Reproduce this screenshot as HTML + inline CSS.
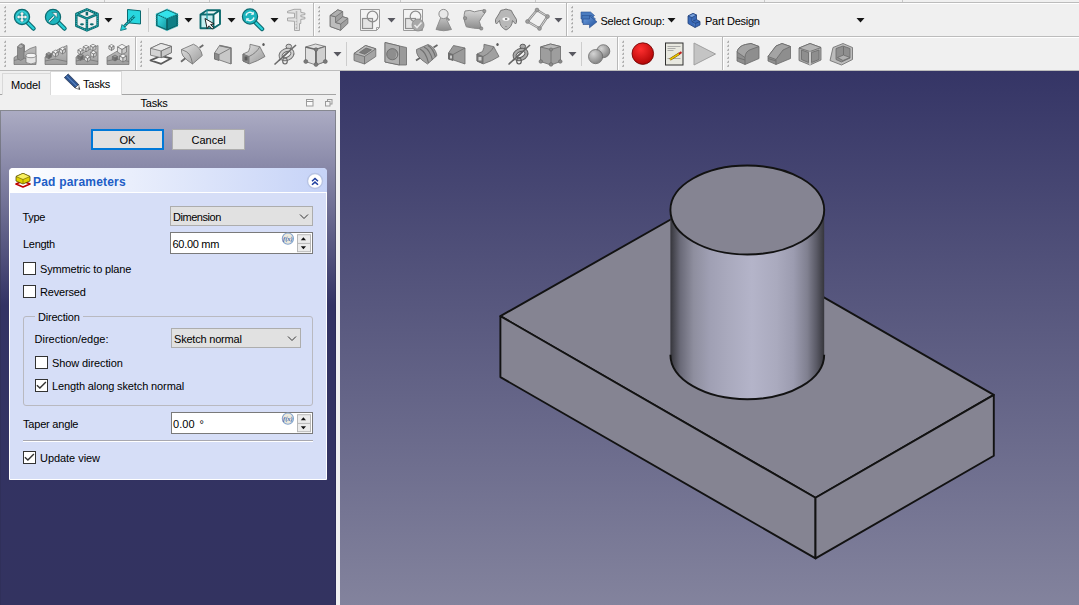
<!DOCTYPE html>
<html><head><meta charset="utf-8">
<style>
*{box-sizing:border-box}
html,body{margin:0;padding:0}
body{width:1079px;height:605px;overflow:hidden;position:relative;background:#f0f0f0;font-family:"Liberation Sans",sans-serif;font-size:11px;color:#000}
.a{position:absolute}
.t{position:absolute;white-space:nowrap;letter-spacing:-0.15px;line-height:13px}
.cb{position:absolute;width:13px;height:13px;border:1px solid #333;background:#fff}
.combo{position:absolute;background:#e1e1e1;border:1px solid #adadad}
.spin{position:absolute;background:#fff;border:1px solid #7a7a7a}
</style></head><body>
<!-- toolbar lines -->
<div class="a" style="left:0;top:2px;width:1079px;height:1px;background:#bcbcbc"></div>
<div class="a" style="left:0;top:3px;width:1079px;height:1px;background:#ffffff"></div>
<div class="a" style="left:0;top:36px;width:1079px;height:1px;background:#bcbcbc"></div>
<div class="a" style="left:0;top:37px;width:1079px;height:1px;background:#ffffff"></div>
<div class="a" style="left:0;top:70px;width:1079px;height:1px;background:#bcbcbc"></div>
<div class="t" style="left:600.5px;top:14.5px;letter-spacing:-0.25px">Select Group:</div>
<div class="t" style="left:705px;top:14.5px;letter-spacing:-0.25px">Part Design</div>

<svg class="a" style="left:0;top:0" width="1079" height="71" viewBox="0 0 1079 71">
<defs>
 <linearGradient id="gg" x1="0" y1="0" x2="1" y2="1"><stop offset="0" stop-color="#e4e4e4"/><stop offset="1" stop-color="#9a9a9a"/></linearGradient>
 <linearGradient id="gg2" x1="0" y1="0" x2="0" y2="1"><stop offset="0" stop-color="#d8d8d8"/><stop offset="1" stop-color="#8c8c8c"/></linearGradient>
 <linearGradient id="tl" x1="0" y1="0" x2="1" y2="1"><stop offset="0" stop-color="#3fe6ee"/><stop offset="1" stop-color="#139aa2"/></linearGradient>
 <radialGradient id="red" cx="0.4" cy="0.3" r="0.8"><stop offset="0" stop-color="#ff3030"/><stop offset="1" stop-color="#a80000"/></radialGradient>
 <linearGradient id="blu" x1="0" y1="0" x2="1" y2="1"><stop offset="0" stop-color="#6fa0e0"/><stop offset="1" stop-color="#1f4f9a"/></linearGradient>
 <radialGradient id="sph" cx="0.35" cy="0.3" r="0.75"><stop offset="0" stop-color="#d4d4d4"/><stop offset="1" stop-color="#808080"/></radialGradient>
 <g id="grip"><rect x="0" y="0" width="2" height="2" fill="#b4b4b4"/></g>
</defs>
<!-- top strip vertical lines -->
<g fill="#c8c8c8">
 <rect x="104" y="0" width="1" height="2"/><rect x="209" y="0" width="1" height="2"/><rect x="252" y="0" width="1" height="2"/>
 <rect x="400" y="0" width="1" height="2"/><rect x="535" y="0" width="1" height="2"/><rect x="764" y="0" width="1" height="2"/><rect x="902" y="0" width="1" height="2"/>
</g>
<!-- toolbar boundaries -->
<g fill="#b8b8b8">
 <rect x="313" y="3" width="1" height="33"/><rect x="566" y="3" width="1" height="33"/>
 <rect x="135" y="37" width="1" height="33"/><rect x="617" y="37" width="1" height="33"/><rect x="722" y="37" width="1" height="33"/>
</g>
<g fill="#ffffff">
 <rect x="314" y="3" width="1" height="33"/><rect x="567" y="3" width="1" height="33"/>
 <rect x="136" y="37" width="1" height="33"/><rect x="618" y="37" width="1" height="33"/><rect x="723" y="37" width="1" height="33"/>
</g>
<!-- separators -->
<g fill="#cdcdcd">
 <rect x="148" y="8" width="1" height="24"/>
 <rect x="346" y="42" width="1" height="24"/><rect x="581" y="42" width="1" height="24"/>
</g>
<!-- grips -->
<path fill="#a8a8a8" d="M5 6.2h1v2h-2v-1h1zM5 10.2h1v2h-2v-1h1zM5 14.2h1v2h-2v-1h1zM5 18.2h1v2h-2v-1h1zM5 22.2h1v2h-2v-1h1zM5 26.2h1v2h-2v-1h1zM5 30.2h1v2h-2v-1h1zM319 6.2h1v2h-2v-1h1zM319 10.2h1v2h-2v-1h1zM319 14.2h1v2h-2v-1h1zM319 18.2h1v2h-2v-1h1zM319 22.2h1v2h-2v-1h1zM319 26.2h1v2h-2v-1h1zM319 30.2h1v2h-2v-1h1zM572 6.2h1v2h-2v-1h1zM572 10.2h1v2h-2v-1h1zM572 14.2h1v2h-2v-1h1zM572 18.2h1v2h-2v-1h1zM572 22.2h1v2h-2v-1h1zM572 26.2h1v2h-2v-1h1zM572 30.2h1v2h-2v-1h1zM5 40.7h1v2h-2v-1h1zM5 44.7h1v2h-2v-1h1zM5 48.7h1v2h-2v-1h1zM5 52.7h1v2h-2v-1h1zM5 56.7h1v2h-2v-1h1zM5 60.7h1v2h-2v-1h1zM5 64.7h1v2h-2v-1h1zM141 40.7h1v2h-2v-1h1zM141 44.7h1v2h-2v-1h1zM141 48.7h1v2h-2v-1h1zM141 52.7h1v2h-2v-1h1zM141 56.7h1v2h-2v-1h1zM141 60.7h1v2h-2v-1h1zM141 64.7h1v2h-2v-1h1zM623 40.7h1v2h-2v-1h1zM623 44.7h1v2h-2v-1h1zM623 48.7h1v2h-2v-1h1zM623 52.7h1v2h-2v-1h1zM623 56.7h1v2h-2v-1h1zM623 60.7h1v2h-2v-1h1zM623 64.7h1v2h-2v-1h1zM728 40.7h1v2h-2v-1h1zM728 44.7h1v2h-2v-1h1zM728 48.7h1v2h-2v-1h1zM728 52.7h1v2h-2v-1h1zM728 56.7h1v2h-2v-1h1zM728 60.7h1v2h-2v-1h1zM728 64.7h1v2h-2v-1h1z"/>
<!-- dropdown arrows -->
<g fill="#151515">
 <path d="M104.5 18h8l-4 4.5z"/><path d="M184.5 18h8l-4 4.5z"/><path d="M227.5 18h8l-4 4.5z"/><path d="M270.5 18h8l-4 4.5z"/>
 <path d="M667.5 18h8l-4 4.5z"/><path d="M856.5 18h8l-4 4.5z"/>
</g>
<g fill="#585860">
 <path d="M387.5 18h8l-4 4.5z"/><path d="M554.5 18h8l-4 4.5z"/>
 <path d="M333.5 52h8l-4 4.5z"/><path d="M568.5 52h8l-4 4.5z"/>
</g>

<!-- ROW 1 TB1 (teal) -->
<!-- zoom fit -->
<path d="M27 22 L33.5 28.5" stroke="#0b6a70" stroke-width="4.5" stroke-linecap="round"/>
<path d="M27 22 L33.5 28.5" stroke="#2ad0d8" stroke-width="2.4" stroke-linecap="round"/>
<circle cx="22" cy="17" r="7.6" fill="#1db5be" stroke="#0b6a70" stroke-width="1.2"/>
<circle cx="22" cy="17" r="5.6" fill="none" stroke="#40d8e0" stroke-width="1"/>
<path d="M22 11.5l2.6 3h-1.6v1.6h1.6v-1.4l3 2.3-3 2.3v-1.4h-1.6v1.6h1.6l-2.6 3-2.6-3h1.6v-1.6h-1.6v1.4l-3-2.3 3-2.3v1.4h1.6v-1.6h-1.6z" fill="#f4f4f4" stroke="#0b6a70" stroke-width=".4"/>
<!-- zoom selection -->
<path d="M58 22 L64.5 28.5" stroke="#0b6a70" stroke-width="4.5" stroke-linecap="round"/>
<path d="M58 22 L64.5 28.5" stroke="#2ad0d8" stroke-width="2.4" stroke-linecap="round"/>
<circle cx="53" cy="17" r="7.6" fill="#1db5be" stroke="#0b6a70" stroke-width="1.2"/>
<path d="M49 21.5l5-5" stroke="#0b6a70" stroke-width="2.6"/>
<path d="M49 21.5l5-5" stroke="#f4f4f4" stroke-width="1.3"/>
<path d="M52 12.5h5.2v5.2z" fill="#f4f4f4" stroke="#0b6a70" stroke-width=".6"/>
<!-- iso cube -->
<g fill="none" stroke-linejoin="round">
<path d="M86.9 9.3L97.6 14V25.8L86.9 30.4L76.3 25.8V14Z M76.3 14L86.9 18.6L97.6 14 M86.9 18.6V30.4 M86.9 11.8V15.6" stroke="#0d6a6e" stroke-width="2.5"/>
<path d="M86.9 9.3L97.6 14V25.8L86.9 30.4L76.3 25.8V14Z M76.3 14L86.9 18.6L97.6 14 M86.9 18.6V30.4" stroke="#2ccfd6" stroke-width="0.8" stroke-dasharray="1.2 1"/>
</g>
<ellipse cx="82" cy="24.3" rx="2" ry="1.1" fill="#0d6a6e"/><ellipse cx="91.8" cy="24.3" rx="2" ry="1.1" fill="#0d6a6e"/>
<!-- set view square -->
<path d="M127.5 9.5L140.5 10.8V24L127.5 22.8Z" fill="#28d6de" stroke="#0b6a70" stroke-width="1"/>
<path d="M134.5 16L124 26.5" stroke="#0b6a70" stroke-width="2.6"/>
<path d="M134.5 16L124 26.5" stroke="#28d6de" stroke-width="1.2" stroke-dasharray="1.5 1"/>
<path d="M120.5 30.5L122 24.5L126.5 29Z" fill="#28d6de" stroke="#0b6a70" stroke-width=".8"/>
<!-- solid teal cube -->
<path d="M167 8.9L178 13.9V25.9L167 30.8L156 25.9V13.9Z" fill="#0b5e62"/>
<path d="M167 10.3L176.4 14.3L167 18.3L157.6 14.3Z" fill="#34e2ea"/>
<path d="M157.5 15.2L166.2 19V29L157.5 25.2Z" fill="url(#tl)"/>
<path d="M176.5 15.2L167.8 19V29L176.5 25.2Z" fill="#0f7f86"/>
<path d="M167 8.9L178 13.9V25.9L167 30.8L156 25.9V13.9Z M156 13.9L167 18.6L178 13.9" fill="none" stroke="#2bd0d8" stroke-width=".7" stroke-dasharray="1.2 1"/>
<!-- wire cube with cursor -->
<path d="M200.5 14.5L207 10.3H220V24L213.5 28.2H200.5Z" fill="#f4fafa"/>
<rect x="201.5" y="15.5" width="11" height="11.7" fill="#c4eef0"/>
<path d="M200.5 14.5H213.5V28.2H200.5Z M200.5 14.5L207 10.3H220L213.5 14.5 M220 10.3V24L213.5 28.2" fill="none" stroke="#0d6a6e" stroke-width="1.9" stroke-linejoin="round"/>
<path d="M207 10.3V14.5 M207 14.5V20" fill="none" stroke="#1a9aa0" stroke-width="1.2"/>
<path d="M205 18.5v10.3l2.5-2.3 2.3 3.8 1.7-.9-2.2-3.8h3.5z" fill="#fafafa" stroke="#1a1a1a" stroke-width=".9" transform="rotate(-12 205 18.5)"/>
<!-- zoom refresh -->
<path d="M255 22 L262 29" stroke="#0b6a70" stroke-width="4.5" stroke-linecap="round"/>
<path d="M255 22 L262 29" stroke="#2ad0d8" stroke-width="2.4" stroke-linecap="round"/>
<circle cx="250" cy="16.5" r="7.6" fill="#1db5be" stroke="#0b6a70" stroke-width="1.2"/>
<path d="M246 15.5a4 4 0 0 1 7.2-1.5M254 17.5a4 4 0 0 1-7.2 1.5" fill="none" stroke="#e8f8f8" stroke-width="1.5"/>
<path d="M253.8 11.5v3.2h-3.2z M246.2 21.5v-3.2h3.2z" fill="#e8f8f8"/>
<!-- caliper -->
<path d="M287.5 11.3L294 9.3H300.8V12.3L305 13.2V14.6L300.8 15.2V16.6L305 17.4V18.8L300.8 19.4V23.5H299.5V30.5H294.5V21.3L287.5 20.8V18L294.5 17.8V13.2L287.5 12.8Z" fill="#e2e2e2" stroke="#a0a0a0" stroke-width=".9" stroke-linejoin="round"/>
<path d="M296.5 11v18" stroke="#b8b8b8" stroke-width="1.6"/>
<path d="M295 20h2M295 23h2M295 26h2" stroke="#f8f8f8" stroke-width=".8"/>
<!-- ROW 1 TB2 (gray disabled) -->
<!-- L-block -->
<g stroke="#6e6e6e" stroke-width=".8" stroke-linejoin="round">
<path d="M330.2 15.4L337.8 9.8L342.7 11.6V16.7L347.9 18.3V23.4L340.7 30.3L330.2 26.5Z" fill="#a0a0a0"/>
<path d="M330.2 15.4L335.5 16.8V22.5L340.7 24V30.3L330.2 26.5Z" fill="#bdbdbd"/>
<path d="M330.2 15.4L337.8 9.8L342.7 11.6L335.5 16.8Z" fill="#b0b0b0"/>
<path d="M335.5 22.5L342.7 16.7L347.9 18.3L340.7 24Z" fill="#b0b0b0"/>
</g>
<!-- sketch -->
<path d="M360.5 9.5h19v18l-3 3h-16z" fill="#f4f4f4" stroke="#9a9a9a" stroke-width="1"/>
<path d="M376.5 30.5v-3h3" fill="none" stroke="#9a9a9a" stroke-width=".9"/>
<rect x="362.5" y="18.5" width="10" height="10" fill="#e4e4e4" stroke="#8e8e8e" stroke-width="1.2"/>
<circle cx="372.5" cy="16.5" r="5.3" fill="none" stroke="#8e8e8e" stroke-width="1.2"/>
<!-- validate sketch -->
<path d="M403.5 9.5h19v21h-19z" fill="#f4f4f4" stroke="#9a9a9a" stroke-width="1"/>
<rect x="405.5" y="18.5" width="10" height="10" fill="#e4e4e4" stroke="#8e8e8e" stroke-width="1.2"/>
<circle cx="415.5" cy="16.5" r="5.3" fill="none" stroke="#8e8e8e" stroke-width="1.2"/>
<circle cx="418" cy="25" r="6" fill="#a8a8a8" stroke="#8a8a8a" stroke-width=".8"/>
<path d="M414.5 25l2.5 2.5 4.5-5" fill="none" stroke="#e8e8e8" stroke-width="1.6"/>
<!-- cone magnifier -->
<path d="M443 12L451.5 29.5Q443.5 32 436 29.5Z" fill="url(#gg2)" stroke="#8a8a8a" stroke-width=".9"/>
<circle cx="443.5" cy="14" r="4.6" fill="#e8e8e8" stroke="#8e8e8e" stroke-width="1"/>
<path d="M446.5 17.5l3 3" stroke="#8e8e8e" stroke-width="1.8"/>
<!-- blob -->
<path d="M465 11Q470 9.5 474.4 11.8Q479 10.5 484.2 10L484.8 13Q481 18 479.3 21.5Q480.5 25 481.5 28.8Q473 28.5 466.3 26.8Q464.5 22 464 18.2Q464 14 465 11Z" fill="url(#gg2)" stroke="#8a8a8a" stroke-width="1"/>
<rect x="482.8" y="9.6" width="3" height="3" rx="1" fill="#9a9a9a" stroke="#707070" stroke-width=".6"/>
<rect x="463.6" y="16.7" width="3" height="3" rx="1" fill="#9a9a9a" stroke="#707070" stroke-width=".6"/>
<rect x="479.8" y="27" width="3" height="3" rx="1" fill="#9a9a9a" stroke="#707070" stroke-width=".6"/>
<!-- sheep -->
<path d="M499.5 13Q500 9.5 503.5 9.8Q506 8.3 508.5 9.8Q512 9.5 512.5 13L516.5 19.5Q517 23 515.5 24L512.5 20.5Q512 27.5 506 30Q500 27.5 499.5 20.5L496.5 24Q495 23 495.5 19.5Z" fill="#b8b8b8" stroke="#7a7a7a" stroke-width="1"/>
<ellipse cx="506" cy="19" rx="3.6" ry="1.8" fill="#fafafa"/>
<rect x="505" y="18.3" width="2.2" height="1.4" fill="#555"/>
<path d="M505 26.5h2" stroke="#888" stroke-width=".7"/>
<!-- diamond -->
<path d="M537 10L547.5 16.5L539.5 28.5L527.5 21.5Z" fill="none" stroke="#8a8a8a" stroke-width="2.4"/>
<path d="M537 10L547.5 16.5L539.5 28.5L527.5 21.5Z" fill="none" stroke="#e4e4e4" stroke-width=".8"/>
<g fill="#9e9e9e" stroke="#7a7a7a" stroke-width=".6"><circle cx="537" cy="10" r="1.9"/><circle cx="547.5" cy="16.5" r="1.9"/><circle cx="539.5" cy="28.5" r="1.9"/><circle cx="527.5" cy="21.5" r="1.9"/></g>

<!-- ROW 1 TB3 -->
<path d="M581 12H590.5L594.5 15.5L590.5 19H581Z" fill="#4a7cc0" stroke="#2a5090" stroke-width=".6"/>
<path d="M582 15.5H591.5L595.5 19L591.5 22.5H582Z" fill="#4577bb" stroke="#2a5090" stroke-width=".6"/>
<path d="M583 19H589.5V16L597 21.8L589.5 27.8V24.5H583Z" fill="url(#blu)" stroke="#24488a" stroke-width=".6"/>
<path d="M688 16L693 13.5L696.5 15V19.5L700 21.5V25L695 27.5L688 23.5Z" fill="#3a6ab8" stroke="#1f3f78" stroke-width=".8"/>
<path d="M688 16L693 13.5L696.5 15L692 17.5Z M692 17.5V21.5L695 23.5V27.5 M696.5 19.5L692 21.5 M695 23.5L700 21.5" fill="#7aa4e0" stroke="#1f3f78" stroke-width=".7"/>

<!-- ROW 2 TB1 -->
<defs><linearGradient id="plat" x1="0" y1="0" x2="0" y2="1"><stop offset="0" stop-color="#c4c4c4"/><stop offset="1" stop-color="#9c9c9c"/></linearGradient></defs>
<g stroke="#6e6e6e" stroke-width=".7" stroke-linejoin="round">
 <!-- icon1 -->
 <path d="M14 57.5L19 54.5V48L21.5 43.5L24.5 45V52L30 48.5L36 46.5V64.5H14Z" fill="url(#plat)"/>
 <path d="M14 60.5L24 58L36 61" fill="none"/>
 <path d="M17.5 47L20.5 44L24 46V58.5L20.5 60.5L17.5 58.5Z" fill="#8e8e8e"/>
 <path d="M17.5 47L20.5 44L24 46L21 48.5Z" fill="#b0b0b0"/>
 <path d="M26 55.5Q31 52.5 36 55.5V62.5Q31 65.5 26 62.5Z" fill="#e4e4e4"/>
 <ellipse cx="31" cy="55.5" rx="5" ry="2.2" fill="#f4f4f4"/>
 <!-- icon2 -->
 <path d="M45 57L58 49.5L67 45.5V64.5H45Z" fill="url(#plat)"/>
 <path d="M45 61L55 59L67 61.5" fill="none"/>
<path d="M48.80 52.30L51.58 53.90L48.80 55.50L46.02 53.90Z" fill="#9a9a9a"/><path d="M46.02 53.90L48.80 55.50L48.80 58.70L46.02 57.10Z" fill="#7a7a7a"/><path d="M51.58 53.90L48.80 55.50L48.80 58.70L51.58 57.10Z" fill="#686868"/><path d="M55.50 50.10L58.46 51.80L55.50 53.50L52.54 51.80Z" fill="#f4f4f4"/><path d="M52.54 51.80L55.50 53.50L55.50 56.90L52.54 55.20Z" fill="#e0e0e0"/><path d="M58.46 51.80L55.50 53.50L55.50 56.90L58.46 55.20Z" fill="#c8c8c8"/><path d="M62.50 47.10L65.46 48.80L62.50 50.50L59.54 48.80Z" fill="#f4f4f4"/><path d="M59.54 48.80L62.50 50.50L62.50 53.90L59.54 52.20Z" fill="#e0e0e0"/><path d="M65.46 48.80L62.50 50.50L62.50 53.90L65.46 52.20Z" fill="#c8c8c8"/>
 <!-- icon3 -->
 <path d="M76 57L89 49.5L98 45.5V64.5H76Z" fill="url(#plat)"/>
 <path d="M76 61L86 59L98 61.5" fill="none"/>
<path d="M80.50 53.80L83.28 55.40L80.50 57.00L77.72 55.40Z" fill="#9a9a9a"/><path d="M77.72 55.40L80.50 57.00L80.50 60.20L77.72 58.60Z" fill="#7a7a7a"/><path d="M83.28 55.40L80.50 57.00L80.50 60.20L83.28 58.60Z" fill="#686868"/><path d="M87.50 55.20L90.37 56.85L87.50 58.50L84.63 56.85Z" fill="#f4f4f4"/><path d="M84.63 56.85L87.50 58.50L87.50 61.80L84.63 60.15Z" fill="#e0e0e0"/><path d="M90.37 56.85L87.50 58.50L87.50 61.80L90.37 60.15Z" fill="#c8c8c8"/><path d="M86.00 45.20L88.87 46.85L86.00 48.50L83.13 46.85Z" fill="#f4f4f4"/><path d="M83.13 46.85L86.00 48.50L86.00 51.80L83.13 50.15Z" fill="#e0e0e0"/><path d="M88.87 46.85L86.00 48.50L86.00 51.80L88.87 50.15Z" fill="#c8c8c8"/><path d="M93.00 44.20L95.87 45.85L93.00 47.50L90.13 45.85Z" fill="#f4f4f4"/><path d="M90.13 45.85L93.00 47.50L93.00 50.80L90.13 49.15Z" fill="#e0e0e0"/><path d="M95.87 45.85L93.00 47.50L93.00 50.80L95.87 49.15Z" fill="#c8c8c8"/><path d="M93.50 50.70L96.37 52.35L93.50 54.00L90.63 52.35Z" fill="#f4f4f4"/><path d="M90.63 52.35L93.50 54.00L93.50 57.30L90.63 55.65Z" fill="#e0e0e0"/><path d="M96.37 52.35L93.50 54.00L93.50 57.30L96.37 55.65Z" fill="#c8c8c8"/><path d="M80.50 48.50L83.11 50.00L80.50 51.50L77.89 50.00Z" fill="#f4f4f4"/><path d="M77.89 50.00L80.50 51.50L80.50 54.50L77.89 53.00Z" fill="#e0e0e0"/><path d="M83.11 50.00L80.50 51.50L80.50 54.50L83.11 53.00Z" fill="#c8c8c8"/>
 <!-- icon4 -->
 <path d="M107 57L120 49.5L129 45.5V64.5H107Z" fill="url(#plat)"/>
 <path d="M107 61L117 59L129 61.5" fill="none"/>
<path d="M122.00 44.30L126.52 46.90L122.00 49.50L117.48 46.90Z" fill="#f4f4f4"/><path d="M117.48 46.90L122.00 49.50L122.00 54.70L117.48 52.10Z" fill="#e0e0e0"/><path d="M126.52 46.90L122.00 49.50L122.00 54.70L126.52 52.10Z" fill="#c8c8c8"/><path d="M111.50 44.50L114.11 46.00L111.50 47.50L108.89 46.00Z" fill="#f4f4f4"/><path d="M108.89 46.00L111.50 47.50L111.50 50.50L108.89 49.00Z" fill="#e0e0e0"/><path d="M114.11 46.00L111.50 47.50L111.50 50.50L114.11 49.00Z" fill="#c8c8c8"/><path d="M115.00 55.00L117.61 56.50L115.00 58.00L112.39 56.50Z" fill="#9a9a9a"/><path d="M112.39 56.50L115.00 58.00L115.00 61.00L112.39 59.50Z" fill="#7a7a7a"/><path d="M117.61 56.50L115.00 58.00L115.00 61.00L117.61 59.50Z" fill="#686868"/><path d="M123.00 54.00L126.48 56.00L123.00 58.00L119.52 56.00Z" fill="#f4f4f4"/><path d="M119.52 56.00L123.00 58.00L123.00 62.00L119.52 60.00Z" fill="#e0e0e0"/><path d="M126.48 56.00L123.00 58.00L123.00 62.00L126.48 60.00Z" fill="#c8c8c8"/>
</g>
<!-- ROW 2 TB2 additive -->
<g stroke="#6e6e6e" stroke-width=".8" stroke-linejoin="round">
 <!-- pad -->
 <path d="M150.5 60.3L160.8 56L171.3 58.3L161.2 63.8Z" fill="#fafafa" stroke="#5a5a5a" stroke-width="1.8"/>
 <path d="M150.5 48.3L161 43.4L171.5 46.4V52.6L161.2 57.7L150.5 55.2Z" fill="#d4d4d4"/>
 <path d="M150.5 48.3L161 43.4L171.5 46.4L161.2 51Z" fill="#e8e8e8"/>
 <path d="M161.2 51L171.5 46.4V52.6L161.2 57.7Z" fill="#c8c8c8"/>
 <path d="M161.2 51V57.7" fill="none"/>
 <!-- revolution -->
 <path d="M181 61.8L186 57.8" stroke="#6a6a6a" stroke-width="1.8"/>
 <path d="M199.5 47.8L203.3 45" stroke="#6a6a6a" stroke-width="1.8"/>
 <path d="M181.5 49.5L193.5 44.2Q200.8 47.5 202.3 55.5L192.5 64Q186 60 183 56Q181 52.5 181.5 49.5Z" fill="url(#gg)"/>
 <path d="M181.5 49.5Q187.5 51.5 189.5 54.5Q191.8 58.5 192.5 64" fill="none"/>
 <!-- loft -->
 <path d="M214.5 53L219.5 45.5L231 48V64L219.5 60L214.5 59Z" fill="#c8c8c8"/>
 <path d="M214.5 53L219 54.5V60.5L214.5 59Z" fill="#8a8a8a"/>
 <path d="M219 54.5L231 48" fill="none"/>
 <path d="M219.5 45.5L231 48V64" fill="none" stroke="#7a7a7a" stroke-width="1.3"/>
 <!-- pipe -->
 <path d="M243 54L248.5 51.5Q250.5 47.5 250 44.3L259.8 46.7Q262 51 265 56.5Q258 61 249.5 63.8L243 61Z" fill="url(#gg)"/>
 <path d="M243 54L249 56.5V63.8L243 61Z" fill="#8a8a8a"/>
 <path d="M244.5 56.5h3v4h-3z" fill="#5a5a5a" stroke="none"/>
 <path d="M249 56.5Q256.5 53 259.8 46.7" fill="none"/>
 <ellipse cx="263.5" cy="44.5" rx="1.2" ry="1.6" fill="#5a5a5a" stroke="none"/>
 <!-- helix -->
 <path d="M274.5 64.5L296 45" stroke="#6a6a6a" stroke-width="1.6"/>
 <ellipse cx="288.8" cy="46.5" rx="2.8" ry="2.3" fill="#cfcfcf" stroke="#6a6a6a" stroke-width="1"/>
 <ellipse cx="286.5" cy="54.5" rx="6.3" ry="4.3" transform="rotate(-25 286.5 54.5)" fill="none" stroke="#6a6a6a" stroke-width="4"/>
 <ellipse cx="286.5" cy="54.5" rx="6.3" ry="4.3" transform="rotate(-25 286.5 54.5)" fill="none" stroke="#d0d0d0" stroke-width="2.2"/>
 <ellipse cx="285" cy="61" rx="2.3" ry="3" fill="none" stroke="#6a6a6a" stroke-width="1.2"/>
 <path d="M279 60.5L291.5 49" stroke="#6a6a6a" stroke-width="1.6"/>
 <!-- primitive cube -->
 <path d="M305.5 47L315.5 44L325.5 46.5V61.5L316 65L305.5 61.5Z" fill="#e0e0e0"/>
 <path d="M305.5 47L316 49.5L325.5 46.5 M316 49.5V65" fill="none" stroke="#6a6a6a" stroke-width="1.4"/>
 <path d="M316 49.5L325.5 46.5V61.5L316 65Z" fill="#cfcfcf"/>
 <path d="M316 49.5V65" fill="none" stroke="#6a6a6a" stroke-width="1.6"/>
 <g fill="#7a7a7a" stroke="#5a5a5a" stroke-width=".5"><circle cx="316" cy="49.5" r="1.8"/><circle cx="316" cy="64.5" r="2"/><circle cx="305.8" cy="61.5" r="2"/><circle cx="325.3" cy="61.5" r="2"/></g>
</g>
<!-- ROW 2 TB2 subtractive -->
<g stroke="#6a6a6a" stroke-width=".8" stroke-linejoin="round">
 <!-- pocket -->
 <path d="M354 53.5L365.5 45.5L375.8 48.8V56.5L364.5 64L354 60.5Z" fill="#a4a4a4"/>
 <path d="M354 53.5L365.5 45.5L375.8 48.8L364.5 56.5Z" fill="#bcbcbc"/>
 <path d="M364.5 56.5V64" fill="none"/>
 <path d="M359.5 52.5L366 48L371.5 49.8L364.8 54.3Z" fill="#7a7a7a"/>
 <!-- hole -->
 <path d="M385 42.5L399.5 46L406.5 47.5V65H399.5L385 62Z" fill="#9a9a9a"/>
 <path d="M385 42.5L399.5 46V65L385 62Z" fill="#b0b0b0"/>
 <circle cx="392.3" cy="54.2" r="5.6" fill="#8e8e8e" stroke="#666"/>
 <path d="M395 50.5Q397 54 395.5 58.5Q397.5 55 395 50.5Z" fill="#f8f8f8" stroke="none"/>
 <!-- groove -->
 <path d="M416 60.5L420.5 57.5" stroke="#666" stroke-width="1.8"/>
 <path d="M433.5 47.5L437.5 45" stroke="#666" stroke-width="1.8"/>
 <path d="M416.5 49.5L428 44.5Q435 47 437 55.5L427.5 64Q421 60 418 56Q416 52.5 416.5 49.5Z" fill="#a0a0a0"/>
 <path d="M420 49Q426 52 428.5 63M424 47Q430 50 432.5 60M428 45.5Q433 48.5 435.5 57" fill="none" stroke="#707070" stroke-width="1.1"/>
 <!-- sub loft -->
 <path d="M448.5 53L453.5 45.5L465 48V64L453.5 60L448.5 59Z" fill="#9a9a9a"/>
 <path d="M448.5 53L453 54.5V60.5L448.5 59Z" fill="#6e6e6e"/>
 <path d="M450 55.5h2v3h-2z" fill="#c8c8c8" stroke="none"/>
 <path d="M453 54.5L465 48" fill="none"/>
 <!-- sub pipe -->
 <path d="M477 54L482.5 51.5Q484.5 47.5 484 44.3L493.8 46.7Q496 51 499 56.5Q492 61 483.5 63.8L477 61Z" fill="#a0a0a0"/>
 <path d="M477 54L483 56.5V63.8L477 61Z" fill="#7a7a7a"/>
 <path d="M478.5 57h3v3.5h-3z" fill="#d0d0d0" stroke="none"/>
 <path d="M483 56.5Q490.5 53 493.8 46.7" fill="none"/>
 <ellipse cx="497.5" cy="44.5" rx="1.2" ry="1.6" fill="#5a5a5a" stroke="none"/>
 <!-- sub helix -->
 <path d="M508.5 64.5L530 45" stroke="#666" stroke-width="1.6"/>
 <ellipse cx="522.8" cy="46.5" rx="2.8" ry="2.3" fill="#a8a8a8" stroke="#5a5a5a" stroke-width="1"/>
 <ellipse cx="520.5" cy="54.5" rx="6.3" ry="4.3" transform="rotate(-25 520.5 54.5)" fill="none" stroke="#5a5a5a" stroke-width="4"/>
 <ellipse cx="520.5" cy="54.5" rx="6.3" ry="4.3" transform="rotate(-25 520.5 54.5)" fill="none" stroke="#a8a8a8" stroke-width="2.2"/>
 <ellipse cx="519" cy="61" rx="2.3" ry="3" fill="none" stroke="#5a5a5a" stroke-width="1.2"/>
 <path d="M513 60.5L525.5 49" stroke="#666" stroke-width="1.6"/>
 <!-- sub primitive -->
 <path d="M540.5 47L550.5 44L560.5 46.5V61.5L551 65L540.5 61.5Z" fill="#9e9e9e"/>
 <path d="M540.5 47L551 49.5L560.5 46.5L550.5 44Z" fill="#b8b8b8"/>
 <path d="M551 49.5V65" fill="none"/>
 <g fill="#8a8a8a" stroke="#5a5a5a" stroke-width=".5"><circle cx="551" cy="49.5" r="1.6"/><circle cx="551" cy="64.5" r="1.8"/><circle cx="540.8" cy="61.5" r="1.8"/><circle cx="560.3" cy="61.5" r="1.8"/></g>
 <!-- boolean -->
 <circle cx="603.3" cy="51.2" r="6.5" fill="url(#sph)"/>
 <circle cx="595.6" cy="56.6" r="7.1" fill="url(#sph)"/>
</g>

<!-- ROW 2 TB3 -->
<circle cx="642.8" cy="53.6" r="10.8" fill="url(#red)" stroke="#6a0000" stroke-width=".8"/>
<rect x="665.5" y="43" width="17.5" height="22" fill="#e8e8e0" stroke="#303030" stroke-width="1"/>
<path d="M667.5 46.5h13M667.5 48.5h8M667.5 50.5h6M667.5 58.5h13" stroke="#9a9a9a" stroke-width=".8"/>
<path d="M670 59.5L679.5 53.5" stroke="#5a4000" stroke-width="2.6"/>
<path d="M670 59.5L679.5 53.5" stroke="#e8c000" stroke-width="1.5"/>
<path d="M679 53.8L681.5 52.2" stroke="#c02020" stroke-width="2"/>
<path d="M694 43L715.5 54L694 65Z" fill="#c4c4c4" stroke="#a0a0a0" stroke-width="1"/>

<!-- ROW 2 TB4 -->
<g stroke="#6a6a6a" stroke-width=".8" stroke-linejoin="round">
 <!-- fillet -->
 <path d="M737 52Q738.5 46 745.5 44.5L751 43.5L759 46.5V58.5L745 64.5L737 61Z" fill="#8e8e8e"/>
 <path d="M737 52Q738.5 46 745.5 44.5L751 43.5L759 46.5L752 49Q745 51 745 57.5Z" fill="#a4a4a4"/>
 <path d="M737 57.5L745 60" fill="none"/>
 <path d="M745 57.5V64.5" fill="none"/>
 <!-- chamfer -->
 <path d="M768 56.5L776 46L782 43.5L790.5 46.5V58.5L776 64.5L768 61Z" fill="#8e8e8e"/>
 <path d="M768 56.5L776 46L782 43.5L790.5 46.5L783 50L776 59.5Z" fill="#a4a4a4"/>
 <path d="M776 59.5V64.5 M768 58.5L776 61" fill="none"/>
 <!-- draft -->
 <path d="M799 48L810 43.5L821 47.5V60L810 65L799 60.5Z" fill="#a8a8a8"/>
 <path d="M799 48L810 43.5L821 47.5L810 51.5Z" fill="#b4b4b4"/>
 <path d="M801.5 50L808.5 52.5V62.5L801.5 59.5Z M811.5 52.5L819 50V59.5L811.5 62.5Z" fill="#8e8e8e"/>
 <path d="M810 51.5V65" fill="none" stroke="#eee" stroke-width="1"/>
 <!-- thickness -->
 <path d="M833 47.5L843 43.5L852.5 47.5V59.5L841.5 65L830 60.5Z" fill="#bcbcbc"/>
 <path d="M836 48.5L843 46L850 48.5V58L841.5 62L836 59.5Z" fill="#8e8e8e"/>
 <path d="M837.5 57.5L843.5 55L850 57.5L843 60.5Z" fill="#b0b0b0"/>
 <path d="M843.5 46.5V55" fill="none"/>
</g>
</svg>

<!-- tab bar -->
<div class="a" style="left:0;top:94px;width:336px;height:1px;background:#a4a4a4"></div>
<div class="a" style="left:2px;top:73px;width:49px;height:22px;background:#f0f0f0;border:1px solid #d9d9d9;border-bottom:none"></div>
<div class="a" style="left:50px;top:71px;width:72px;height:24px;background:#fff;border:1px solid #d9d9d9;border-bottom:none"></div>
<div class="t" style="left:11px;top:78.5px;font-size:11px;letter-spacing:-0.1px">Model</div>
<svg class="a" style="left:63px;top:73px" width="18" height="18" viewBox="0 0 18 18">
 <path d="M1.3 4.6L5.2 1L15.6 11.4L12 15Z" fill="#2f5590" stroke="#1c2c48" stroke-width=".7"/>
 <path d="M3.3 2.8L13.8 13.2" stroke="#6a9ad8" stroke-width="1"/>
 <path d="M12 15L15.6 11.4L16.8 16.6Z" fill="#f4f4f4" stroke="#333" stroke-width=".6"/>
 <path d="M15.2 15l1.6 1.6-.6-2.4z" fill="#111"/>
</svg>
<div class="t" style="left:83px;top:77.5px;font-size:11px;letter-spacing:-0.2px">Tasks</div>
<div class="t" style="left:140.5px;top:96.5px;font-size:11px;letter-spacing:-0.2px">Tasks</div>
<svg class="a" style="left:303px;top:96px" width="33" height="12" viewBox="0 0 33 12">
 <rect x="3.5" y="3.5" width="6.5" height="6.5" fill="#fafafa" stroke="#9a9a9a" stroke-width="1"/>
 <path d="M3.5 5.5h6.5" stroke="#9a9a9a" stroke-width="1"/>
 <rect x="24.5" y="3.5" width="4.5" height="4.5" fill="none" stroke="#9a9a9a" stroke-width="1"/>
 <rect x="22.5" y="5.5" width="4.5" height="4.5" fill="#f4f4f4" stroke="#9a9a9a" stroke-width="1"/>
</svg>

<!-- task panel bg -->

<div class="a" style="left:0;top:110px;width:336px;height:495px;background:linear-gradient(to bottom,#acacc4 0px,#333364 195px,#333360 495px)"></div>
<div class="a" style="left:0;top:110px;width:336px;height:1px;background:#868890"></div>
<div class="a" style="left:0;top:110px;width:1px;height:495px;background:linear-gradient(to bottom,#868890,#30305a 200px)"></div>
<div class="a" style="left:335px;top:110px;width:1px;height:495px;background:linear-gradient(to bottom,#868890,#2c2c58 200px)"></div>

<!-- OK / Cancel -->
<div class="a" style="left:91px;top:129px;width:73px;height:21px;background:#e1e1e1;border:2px solid #0078d7"></div>
<div class="t" style="left:119.5px;top:133.5px">OK</div>
<div class="a" style="left:172px;top:129px;width:73px;height:21px;background:#e1e1e1;border:1px solid #adadad"></div>
<div class="t" style="left:191.5px;top:133.5px;letter-spacing:0px">Cancel</div>

<!-- pad parameters box -->
<div class="a" style="left:9px;top:168px;width:318px;height:312px;background:#d6def7;border:1px solid #fff;border-radius:4px 4px 0 0"></div>
<div class="a" style="left:9px;top:168px;width:318px;height:25px;background:linear-gradient(to right,#ffffff,#c6d3f7);border-radius:4px 4px 0 0;border-bottom:1px solid #fff"></div>
<svg class="a" style="left:14px;top:171px" width="18" height="18" viewBox="0 0 18 18">
 <path d="M2 13L9 10L16 13L9 16Z" fill="#fff" stroke="#c00000" stroke-width="1.7" stroke-linejoin="round"/>
 <path d="M2 5.5L9 2.3L16 5.5V10L9 13L2 10Z" fill="#e0d000" stroke="#5a5000" stroke-width=".8" stroke-linejoin="round"/>
 <path d="M2 5.5L9 2.3L16 5.5L9 8.5Z" fill="#f8f060" stroke="#5a5000" stroke-width=".6"/>
 <path d="M9 8.5V13" stroke="#6a6000" stroke-width=".6"/>
</svg>
<div class="t" style="left:33px;top:176px;font-size:12px;font-weight:bold;color:#215dc6;letter-spacing:0.2px">Pad parameters</div>
<svg class="a" style="left:306px;top:172px" width="18" height="18" viewBox="0 0 18 18">
 <circle cx="9" cy="9" r="7.5" fill="#fff" stroke="#b8c4e4" stroke-width="1.4"/>
 <path d="M6 9.2l3-2.7 3 2.7M6 12.8l3-2.7 3 2.7" fill="none" stroke="#1e3ea0" stroke-width="1.5"/>
</svg>

<!-- rows -->
<div class="t" style="left:22.5px;top:210.5px;letter-spacing:-0.35px">Type</div>
<div class="combo" style="left:170px;top:206px;width:143px;height:20px"></div>
<div class="t" style="left:173px;top:210.5px;letter-spacing:-0.45px">Dimension</div>
<svg class="a" style="left:298px;top:212px" width="11" height="8" viewBox="0 0 11 8"><path d="M2 2.5l4 4 4-4" fill="none" stroke="#333" stroke-width="1"/></svg>

<div class="t" style="left:23px;top:237.5px;letter-spacing:-0.3px">Length</div>
<div class="spin" style="left:170px;top:232px;width:143px;height:22px"></div>
<div class="t" style="left:172.5px;top:237.5px;letter-spacing:-0.3px">60.00 mm</div>

<div class="cb" style="left:23px;top:262px"></div>
<div class="t" style="left:40px;top:262.5px;letter-spacing:-0.17px">Symmetric to plane</div>
<div class="cb" style="left:23px;top:285px"></div>
<div class="t" style="left:40px;top:285.5px;letter-spacing:-0.17px">Reversed</div>

<!-- group box -->
<div class="a" style="left:23px;top:316px;width:290px;height:90px;border:1px solid #b9b9c0;border-radius:3px"></div>
<div class="a" style="left:35px;top:312px;width:48px;height:8px;background:#d6def7"></div>
<div class="t" style="left:38px;top:310.5px;letter-spacing:-0.2px">Direction</div>
<div class="t" style="left:34.5px;top:332.5px;letter-spacing:0px">Direction/edge:</div>
<div class="combo" style="left:171px;top:328px;width:130px;height:20px"></div>
<div class="t" style="left:174px;top:332.5px;letter-spacing:-0.2px">Sketch normal</div>
<svg class="a" style="left:286px;top:334px" width="11" height="8" viewBox="0 0 11 8"><path d="M2 2.5l4 4 4-4" fill="none" stroke="#333" stroke-width="1"/></svg>
<div class="cb" style="left:35px;top:356px"></div>
<div class="t" style="left:52px;top:356.5px;letter-spacing:-0.1px">Show direction</div>
<div class="cb" style="left:35px;top:379px"></div>
<div class="t" style="left:52px;top:379.5px;letter-spacing:-0.12px">Length along sketch normal</div>

<div class="t" style="left:23px;top:417.5px;letter-spacing:-0.2px">Taper angle</div>
<div class="spin" style="left:171px;top:412px;width:142px;height:22px"></div>
<div class="t" style="left:173px;top:417.5px;letter-spacing:0.1px;word-spacing:1.5px">0.00 °</div>
<div class="a" style="left:23px;top:440px;width:290px;height:1px;background:#a8a8b0"></div>
<div class="a" style="left:23px;top:441px;width:290px;height:1px;background:#fff"></div>
<div class="cb" style="left:23px;top:451px"></div>
<div class="t" style="left:40px;top:451.5px;letter-spacing:-0.05px">Update view</div>
<!-- spin buttons + fx -->
<svg class="a" style="left:0;top:0" width="336" height="480" viewBox="0 0 336 480">
 <defs>
  <g id="spinbtn">
   <rect x="297.5" y="0.5" width="13" height="17" fill="#ececec" stroke="#b8b8b8" stroke-width="1"/>
   <path d="M297.5 9.2h13" stroke="#b8b8b8" stroke-width="1"/>
   <path d="M300.8 6l2.6-3 2.6 3z" fill="#111"/>
   <path d="M300.8 12l2.6 3 2.6-3z" fill="#111"/>
   <circle cx="287.9" cy="4.4" r="5.6" fill="#ece9dc" stroke="#86a4cc" stroke-width="1.1"/>
   <text x="287.9" y="6.8" font-family="Liberation Serif" font-style="italic" font-size="6.5" font-weight="bold" fill="#4068b0" text-anchor="middle">f(x)</text>
  </g>
 </defs>
 <use href="#spinbtn" x="0" y="234.2"/>
 <use href="#spinbtn" x="0" y="414.2"/>
 <path d="M36.9 385.3L39.9 388.1L45.9 382.1" fill="none" stroke="#333" stroke-width="1.4"/>
 <path d="M24.9 457.3L27.9 460.1L33.9 454.1" fill="none" stroke="#333" stroke-width="1.4"/>
</svg>

<!-- 3d view -->
<div class="a" style="left:340px;top:71px;width:739px;height:534px;background:linear-gradient(to bottom,#353566,#83839d)"></div>
<svg class="a" style="left:0;top:0" width="1079" height="605" viewBox="0 0 1079 605">
<defs>
 <linearGradient id="cyl" x1="670.4" y1="0" x2="824.2" y2="0" gradientUnits="userSpaceOnUse">
  <stop offset="0" stop-color="#36363c"/>
  <stop offset="0.065" stop-color="#6a6a78"/>
  <stop offset="0.15" stop-color="#8e8e9e"/>
  <stop offset="0.26" stop-color="#a0a0b4"/>
  <stop offset="0.37" stop-color="#a9a9bd"/>
  <stop offset="0.53" stop-color="#b4b4c9"/>
  <stop offset="0.69" stop-color="#aaaabe"/>
  <stop offset="0.80" stop-color="#9c9cb0"/>
  <stop offset="0.89" stop-color="#808090"/>
  <stop offset="0.95" stop-color="#5a5a66"/>
  <stop offset="1" stop-color="#36363c"/>
 </linearGradient>
</defs>
<g stroke="#121212" stroke-width="1.9" stroke-linejoin="round" fill="#858492">
 <path d="M500.4 316.1L679.5 214.5L993.8 394.9L815.5 497.8Z"/>
 <path d="M500.4 316.1L815.5 497.8L815.5 558.4L500.4 377.1Z"/>
 <path d="M815.5 497.8L993.8 394.9L993.8 455.8L815.5 558.4Z"/>
 <path d="M670.4 210V354.7A76.9 44.5 0 0 0 824.2 354.7V210Z" fill="url(#cyl)" stroke="none"/>
 <path d="M670.4 354.7A76.9 44.5 0 0 0 824.2 354.7" fill="none"/>
 <ellipse cx="747.3" cy="210" rx="76.9" ry="44.5"/>
</g>
</svg>

</body></html>
